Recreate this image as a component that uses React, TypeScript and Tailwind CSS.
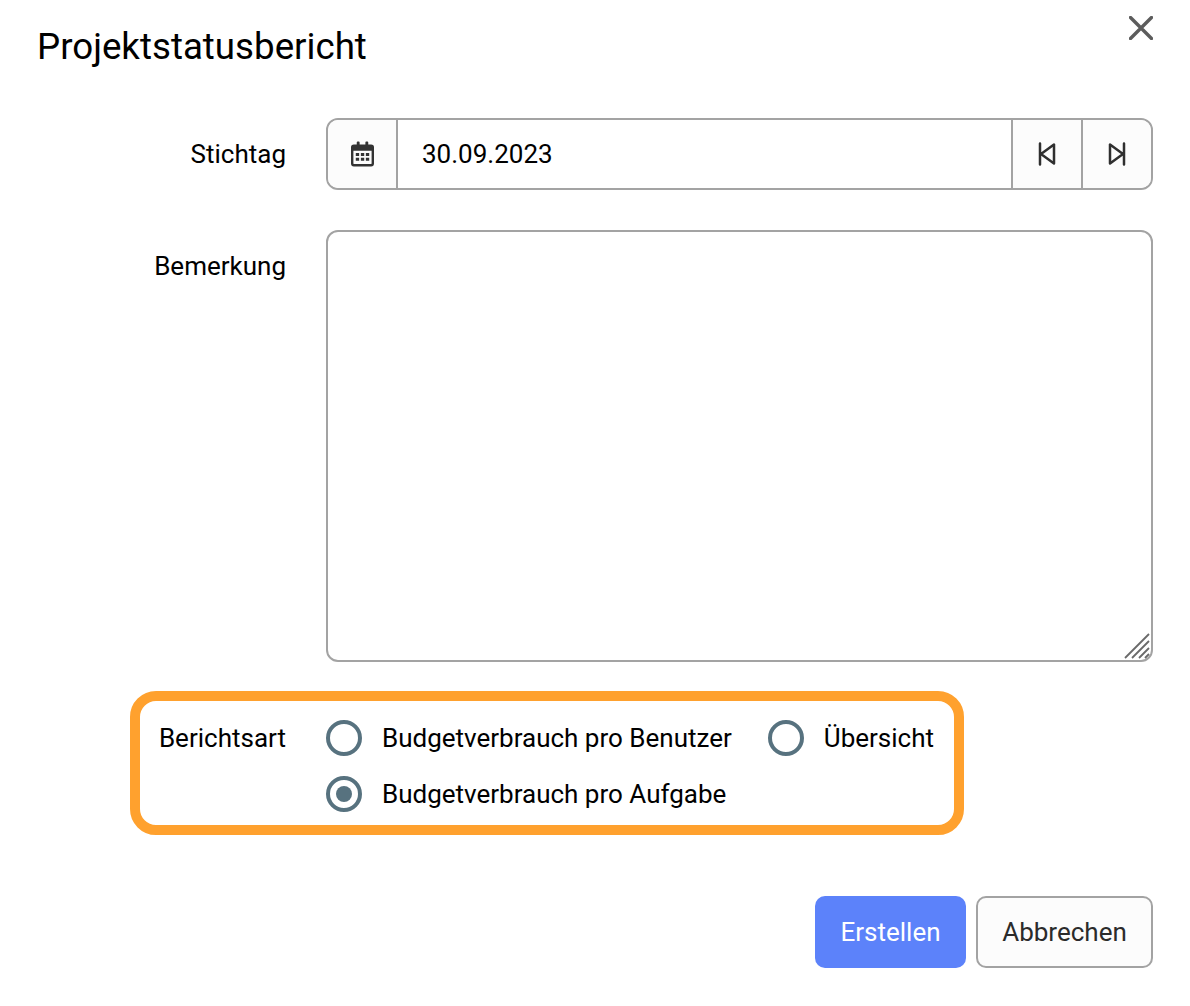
function Radio({ checked, label }: { checked?: boolean; label: string }) {
  return (
    <label className="flex items-center gap-[20px] h-9">
      <span className="flex items-center justify-center w-9 h-9 rounded-full border-[4px] border-[#57727f] bg-white shrink-0">
        {checked && <span className="block w-4 h-4 rounded-full bg-[#57727f]" />}
      </span>
      <span className="text-[26px] leading-9 text-black whitespace-nowrap">{label}</span>
    </label>
  )
}

export default function App() {
  return (
    <main className="w-[1190px] h-[1006px] bg-white font-['Roboto',sans-serif] pl-[37px] pr-[37px] overflow-hidden">
      {/* Header */}
      <header className="flex justify-between items-start h-[118px]">
        <h1 className="text-[36.7px] leading-[42px] mt-[26px] text-black">Projektstatusbericht</h1>
        <button className="mt-[16px] w-6 h-6 text-[#5c5c5c]">
          <svg viewBox="0 0 24 24" width="24" height="24" fill="none" stroke="currentColor" strokeWidth="3.4" strokeLinecap="round">
            <path d="M1.500 1.500 L22.500 22.500 M22.500 1.500 L1.500 22.500" />
          </svg>
        </button>
      </header>

      {/* Stichtag */}
      <div className="flex items-center">
        <div className="w-[249px] text-right text-[26px] leading-9 text-black">Stichtag</div>
        <div className="ml-[40px] flex-1 h-[72px] flex border-2 border-[#a3a3a3] rounded-[12px] overflow-hidden">
          <div className="w-[70px] bg-[#fcfcfc] border-r-2 border-[#a3a3a3] flex items-center justify-center">
            <svg viewBox="0 0 24 26" width="23" height="26" className="text-[#333] ml-[1px]">
              <path fill="currentColor" fillRule="evenodd" d="M3 3h3V1a1 1 0 0 1 1-1h1a1 1 0 0 1 1 1v2h6V1a1 1 0 0 1 1-1h1a1 1 0 0 1 1 1v2h3a3 3 0 0 1 3 3v17a3 3 0 0 1-3 3H3a3 3 0 0 1-3-3V6a3 3 0 0 1 3-3zM2.500 9.500V23a.5.500 0 0 0 .5.500h18a.5.500 0 0 0 .5-.5V9.500z" />
              <path fill="currentColor" d="M5 12h3.500v3H5zM10.300 12h3.500v3h-3.500zM15.500 12H19v3h-3.500zM5 17h3.500v3H5zM10.300 17h3.500v3h-3.500zM15.500 17H19v3h-3.500z" />
            </svg>
          </div>
          <div className="flex-1 flex items-center pl-6 text-[26px] leading-9 text-black bg-white">30.09.2023</div>
          <div className="w-[70px] bg-[#fcfcfc] border-l-2 border-[#a3a3a3] flex items-center justify-center">
            <svg viewBox="0 0 18 24" width="18" height="24" fill="none" stroke="#2f2f2f" strokeWidth="2.500" strokeLinejoin="round" strokeLinecap="round">
              <path d="M2 1.500v21M16 2.500v19L3 12z" />
            </svg>
          </div>
          <div className="w-[70px] bg-[#fcfcfc] border-l-2 border-[#a3a3a3] flex items-center justify-center">
            <svg viewBox="0 0 18 24" width="18" height="24" fill="none" stroke="#2f2f2f" strokeWidth="2.500" strokeLinejoin="round" strokeLinecap="round">
              <path d="M16 1.500v21M2 2.500v19L15 12z" />
            </svg>
          </div>
        </div>
      </div>

      {/* Bemerkung */}
      <div className="flex mt-[40px]">
        <div className="w-[249px] text-right text-[26px] text-black pt-[18px] leading-9">Bemerkung</div>
        <div className="relative ml-[40px] flex-1 h-[432px] border-2 border-[#a3a3a3] rounded-[12px] bg-white">
          <svg viewBox="0 0 26 26" width="26" height="26" className="absolute right-[1px] bottom-[1px]" stroke="#6a6a6a" strokeWidth="1.8">
            <path d="M1 25 L25 1 M8 25 L25 8 M15 25 L25 15 M21 25 L25 21" />
          </svg>
        </div>
      </div>

      {/* Berichtsart */}
      <div className="ml-[93px] mt-[29px] w-[834px] h-[144px] border-[10px] border-[#ffa12e] rounded-[26px] flex">
        <div className="w-[146px] text-right text-[26px] leading-9 text-black mt-[19px] shrink-0">Berichtsart</div>
        <div className="ml-[40px] mt-[19px] flex flex-col gap-5">
          <div className="flex gap-[36px]">
            <Radio label="Budgetverbrauch pro Benutzer" />
            <Radio label="Übersicht" />
          </div>
          <Radio checked label="Budgetverbrauch pro Aufgabe" />
        </div>
      </div>

      {/* Footer */}
      <div className="flex justify-end gap-[10px] mt-[61px]">
        <button className="w-[151px] h-[72px] rounded-[10px] bg-[#5c82fa] text-white text-[26px]">Erstellen</button>
        <button className="w-[177px] h-[72px] rounded-[10px] bg-[#fcfcfc] border-2 border-[#a3a3a3] text-[#2b2b2b] text-[26px]">Abbrechen</button>
      </div>
    </main>
  )
}
